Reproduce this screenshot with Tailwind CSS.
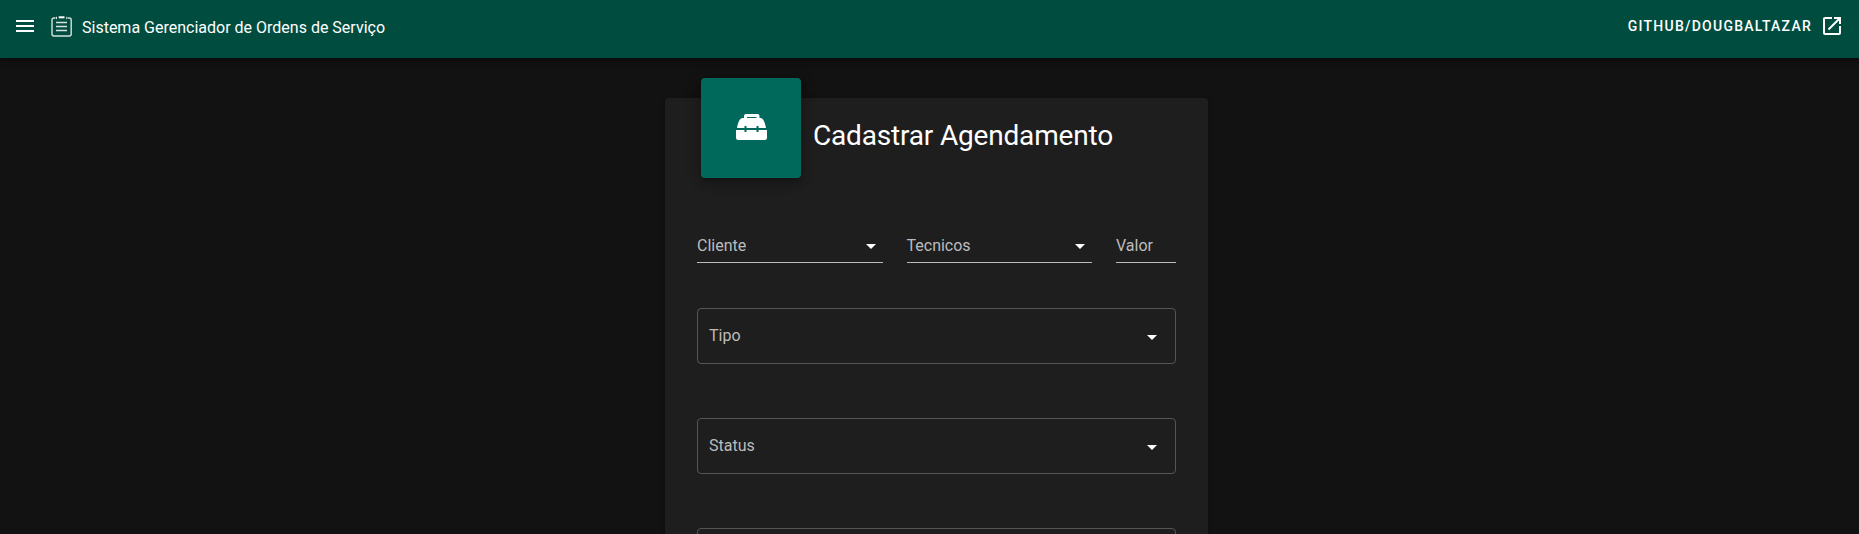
<!DOCTYPE html>
<html lang="pt-BR">
<head>
<meta charset="utf-8">
<title>Sistema Gerenciador de Ordens de Serviço</title>
<script src="https://cdn.jsdelivr.net/npm/@tailwindcss/browser@4"></script>
</head>
<body class="bg-[#121212]">
<div class="h-[534px] overflow-hidden font-['Roboto',sans-serif] text-base text-white">
<header class="relative flex h-[58px] items-start justify-between bg-[#004d40] pl-[13px] pr-[15px] pt-[14px] shadow-[0_2px_4px_-1px_rgba(0,0,0,.2),0_4px_5px_rgba(0,0,0,.14),0_1px_10px_rgba(0,0,0,.12)]">
  <div class="flex">
    <svg class="size-6" viewBox="0 0 24 24" fill="currentColor"><path d="M3 6h18v2H3zM3 11h18v2H3zM3 16h18v2H3z"/></svg>
    <svg class="ml-[13px] mt-px h-6 w-6" viewBox="0 0 24 24" fill="none" stroke="#d5e2df" stroke-width="1.4"><path d="M5.500 3H4A2 2 0 0 0 2 5V19a2 2 0 0 0 2 2H19.200a2 2 0 0 0 2-2V5A2 2 0 0 0 19.200 3H17.700M6 7.500H17M6 11.500H17M6 15.500H17"/><path d="M6.500 1.800v2.400M16.700 1.800v2.400" stroke-width="1"/><path d="M8.700 2.300h5.800" stroke-width="2" stroke="#fff"/></svg>
    <span class="ml-2 mt-0.5 leading-6">Sistema Gerenciador de Ordens de Serviço</span>
  </div>
  <div class="flex">
    <span class="text-sm font-medium leading-6 tracking-[1.25px]">GITHUB/DOUGBALTAZAR</span>
    <svg class="ml-2 size-6" viewBox="0 0 24 24" fill="currentColor"><path d="M14 3V5H17.590L7.760 14.830L9.170 16.240L19 6.410V10H21V3M19 19H5V5H12V3H5C3.890 3 3 3.900 3 5V19A2 2 0 0 0 5 21H19A2 2 0 0 0 21 19V12H19V19Z"/></svg>
  </div>
</header>
<main class="ml-[665px] mt-10 h-[500px] w-[543px] rounded bg-[#1e1e1e] px-8 shadow-[0_3px_1px_-2px_rgba(0,0,0,.2),0_2px_2px_rgba(0,0,0,.14),0_1px_5px_rgba(0,0,0,.12)]">
  <div class="flex h-[130px] items-start pl-1">
    <div class="-mt-5 flex size-[100px] items-center justify-center rounded bg-[#00695c] shadow-[0_3px_5px_-1px_rgba(0,0,0,.2),0_6px_10px_rgba(0,0,0,.14),0_1px_18px_rgba(0,0,0,.12)]">
      <svg class="size-8" viewBox="0 0 32 32" fill="#fff"><path fill-rule="evenodd" d="M11 2h11.500a2 2 0 0 1 2 2v2h1c2.500 0 4.500 4 5.500 10H2C3 10 5 6 7.500 6H9V4a2 2 0 0 1 2-2zm1 3v1h9.500V5z"/><path d="M1 18h31v7.500a2.500 2.500 0 0 1-2.500 2.500h-26A2.500 2.500 0 0 1 1 25.500z"/><path d="M9.500 14h2v6h-2zM21.500 14h2v6h-2z" fill="#00695c"/></svg>
    </div>
    <h1 class="ml-3 mt-[22px] text-[28px] leading-8 tracking-[-0.18px]">Cadastrar Agendamento</h1>
  </div>
  <div class="flex gap-6 text-[#bcbcbc]">
    <div class="flex h-[35px] w-[185.5px] items-start justify-between border-b border-[#bcbcbc]"><span class="mt-1.5 leading-6">Cliente</span><svg class="mt-1.5 size-6 text-white" viewBox="0 0 24 24" fill="currentColor"><path d="M7 10l5 5 5-5z"/></svg></div>
    <div class="flex h-[35px] w-[185.5px] items-start justify-between border-b border-[#bcbcbc]"><span class="mt-1.5 leading-6">Tecnicos</span><svg class="mt-1.5 size-6 text-white" viewBox="0 0 24 24" fill="currentColor"><path d="M7 10l5 5 5-5z"/></svg></div>
    <div class="h-[35px] w-[60px] border-b border-[#bcbcbc]"><span class="mt-1.5 block leading-6">Valor</span></div>
  </div>
  <div class="mt-[45px] flex flex-col gap-[54px] text-[#bcbcbc]">
    <div class="flex h-14 items-center justify-between rounded border border-[#555] px-[11px]"><span>Tipo</span><svg class="mt-0.5 size-6 text-white" viewBox="0 0 24 24" fill="currentColor"><path d="M7 10l5 5 5-5z"/></svg></div>
    <div class="flex h-14 items-center justify-between rounded border border-[#555] px-[11px]"><span>Status</span><svg class="mt-0.5 size-6 text-white" viewBox="0 0 24 24" fill="currentColor"><path d="M7 10l5 5 5-5z"/></svg></div>
    <div class="h-14 rounded border border-[#555]"></div>
  </div>
</main>
</div>
</body>
</html>
